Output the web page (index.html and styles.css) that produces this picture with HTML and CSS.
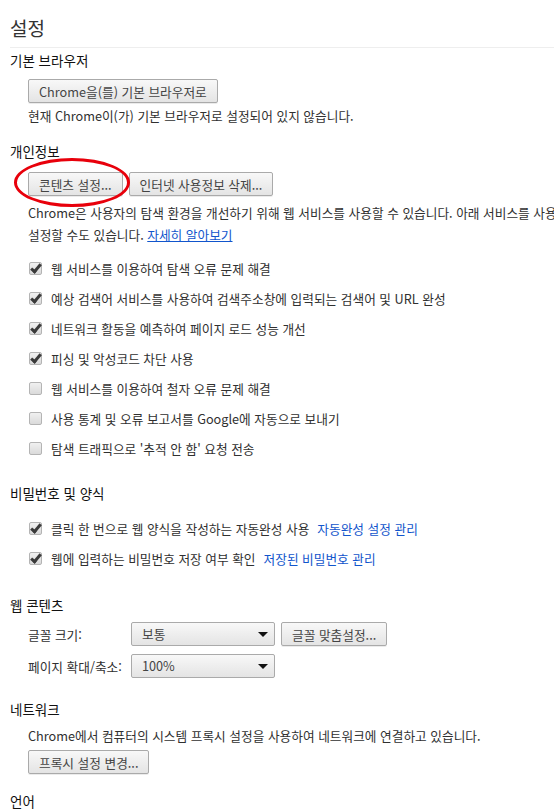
FILE: index.html
```html
<!DOCTYPE html>
<html lang="ko">
<head>
<meta charset="UTF-8">
<title>설정</title>
<link rel="stylesheet" href="styles.css">
</head>
<body>
<div class="page">
  <h1>설정</h1>

  <section class="sect sect-first">
    <h3>기본 브라우저</h3>
    <div class="sect-body">
      <button class="btn btn-default">Chrome을(를) 기본 브라우저로</button>
      <p class="note">현재 Chrome이(가) 기본 브라우저로 설정되어 있지 않습니다.</p>
    </div>
  </section>

  <section class="sect sect-privacy">
    <h3>개인정보</h3>
    <div class="sect-body">
      <div class="btn-row">
        <button class="btn">콘텐츠 설정...</button>
        <button class="btn">인터넷 사용정보 삭제...</button>
        <span class="mark"></span>
      </div>
      <p class="desc">Chrome은 사용자의 탐색 환경을 개선하기 위해 웹 서비스를 사용할 수 있습니다. 아래 서비스를 사용하지 않도록 선택적으로<br>설정할 수도 있습니다. <a href="#">자세히 알아보기</a></p>
      <div class="checks">
        <label class="check"><span class="box on"></span>웹 서비스를 이용하여 탐색 오류 문제 해결</label>
        <label class="check"><span class="box on"></span>예상 검색어 서비스를 사용하여 검색주소창에 입력되는 검색어 및 URL 완성</label>
        <label class="check"><span class="box on"></span>네트워크 활동을 예측하여 페이지 로드 성능 개선</label>
        <label class="check"><span class="box on"></span>피싱 및 악성코드 차단 사용</label>
        <label class="check"><span class="box"></span>웹 서비스를 이용하여 철자 오류 문제 해결</label>
        <label class="check"><span class="box"></span>사용 통계 및 오류 보고서를 Google에 자동으로 보내기</label>
        <label class="check"><span class="box"></span>탐색 트래픽으로 '추적 안 함' 요청 전송</label>
      </div>
    </div>
  </section>

  <section class="sect sect-pass">
    <h3>비밀번호 및 양식</h3>
    <div class="sect-body">
      <div class="checks">
        <label class="check"><span class="box on"></span>클릭 한 번으로 웹 양식을 작성하는 자동완성 사용<a class="side-link" href="#">자동완성 설정 관리</a></label>
        <label class="check"><span class="box on"></span>웹에 입력하는 비밀번호 저장 여부 확인<a class="side-link" href="#">저장된 비밀번호 관리</a></label>
      </div>
    </div>
  </section>

  <section class="sect sect-web">
    <h3>웹 콘텐츠</h3>
    <div class="sect-body">
      <div class="field">
        <span class="field-label">글꼴 크기:</span>
        <span class="select">보통</span>
        <button class="btn">글꼴 맞춤설정...</button>
      </div>
      <div class="field">
        <span class="field-label">페이지 확대/축소:</span>
        <span class="select">100%</span>
      </div>
    </div>
  </section>

  <section class="sect sect-net">
    <h3>네트워크</h3>
    <div class="sect-body">
      <p class="net-note">Chrome에서 컴퓨터의 시스템 프록시 설정을 사용하여 네트워크에 연결하고 있습니다.</p>
      <button class="btn">프록시 설정 변경...</button>
    </div>
  </section>

  <section class="sect sect-lang">
    <h3>언어</h3>
  </section>
</div>
</body>
</html>
```

FILE: styles.css
```css
html, body {
  overflow: hidden;
}
body {
  margin: 0;
  font-family: "Noto Sans CJK KR", "Noto Sans", sans-serif;
  font-size: 12.7px;
  color: #303030;
  background: #fff;
}
.page {
  width: 640px;
  padding: 0 0 0 10px;
}
h1 {
  margin: 0;
  padding: 14px 0 5px;
  font-size: 19px;
  line-height: 28px;
  font-weight: normal;
  color: #333;
  border-bottom: 1px solid #eee;
}
h3 {
  margin: 0;
  font-size: 13.5px;
  line-height: 20px;
  font-weight: normal;
  color: #111;
}
.sect-body {
  padding-left: 18px;
}
.sect-first { margin-top: 2px; }
.sect-privacy { margin-top: 14px; }
.sect-pass { margin-top: 20px; }
.sect-web { margin-top: 22px; }
.sect-net { margin-top: 21px; }
.sect-lang { margin-top: 17px; }

.btn {
  height: 24px;
  padding: 0 10px;
  font-family: inherit;
  font-size: 12.7px;
  color: #444;
  border: 1px solid #aaa;
  border-radius: 2px;
  background: linear-gradient(#f8f8f8, #e4e4e4);
  box-shadow: 0 1px 0 rgba(0,0,0,0.08);
}
.btn-default {
  margin-top: 9px;
}
.note {
  margin: 2px 0 0;
  line-height: 22px;
}
.btn-row {
  position: relative;
  display: flex;
  gap: 6px;
  margin-top: 11px;
}
.mark {
  position: absolute;
  left: -14px;
  top: -14px;
  width: 110px;
  height: 43px;
  border: 3px solid #e8000b;
  border-radius: 50%;
}
.desc {
  margin: 6px 0 0;
  line-height: 22px;
  white-space: nowrap;
}
a {
  color: #15c;
}
.checks {
  margin-top: 7px;
}
.sect-pass .checks {
  margin-top: 10px;
}
.check {
  display: flex;
  align-items: center;
  height: 30px;
  white-space: nowrap;
}
.box {
  width: 11px;
  height: 11px;
  margin: 0 9px 0 1px;
  border: 1px solid #b4b4b4;
  border-radius: 2px;
  background: linear-gradient(#f0f0f0, #dadada);
  position: relative;
}
.box.on::after {
  content: "";
  position: absolute;
  left: 3px;
  top: -1px;
  width: 3px;
  height: 8px;
  border: solid #3a3a3a;
  border-width: 0 3px 3px 0;
  transform: rotate(40deg);
}
.side-link {
  margin-left: 8px;
  text-decoration: none;
}
.field {
  display: flex;
  align-items: center;
  gap: 6px;
  height: 24px;
  margin-top: 7px;
}
.field + .field {
  margin-top: 8px;
}
.field-label {
  width: 97px;
}
.select {
  box-sizing: border-box;
  width: 144px;
  height: 24px;
  line-height: 22px;
  padding-left: 10px;
  color: #444;
  border: 1px solid #aaa;
  border-radius: 2px;
  background: linear-gradient(#f8f8f8, #e4e4e4);
  position: relative;
}
.select::after {
  content: "";
  position: absolute;
  right: 6px;
  top: 9px;
  border-left: 5px solid transparent;
  border-right: 5px solid transparent;
  border-top: 5px solid #111;
}
.net-note {
  margin: 6px 0 0;
  line-height: 22px;
}
.sect-net .btn {
  margin-top: 3px;
}
```
